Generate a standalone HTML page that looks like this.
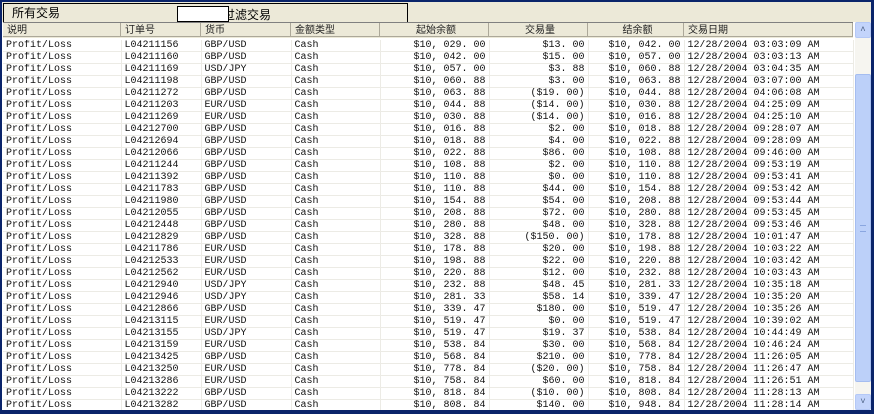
<!DOCTYPE html>
<html><head><meta charset="utf-8"><style>
body{margin:0;width:874px;height:414px;overflow:hidden;background:#0a246a;position:relative;font-family:"Liberation Mono","Noto Sans CJK SC",monospace;}
#win{position:absolute;left:2px;top:2px;width:869px;height:408px;background:#fff;overflow:hidden}
#tabs{position:absolute;left:0;top:0;width:869px;height:20px;background:#ece9d8;}
.tab{position:absolute;top:1px;height:19px;border:1px solid #000;border-bottom:none;font:12px "Liberation Sans","Noto Sans CJK SC",sans-serif;line-height:19px;background:#ece9d8}
#hdr{position:absolute;left:1px;top:20px;height:15px;width:850px;background:#ece9d8;border-top:1px solid #808080}
.h{position:absolute;top:0;height:14px;border-right:1px solid #aca899;border-bottom:1px solid #aca899;font:10px "Liberation Sans","Noto Sans CJK SC",sans-serif;line-height:15px;color:#222;padding-left:4px;box-sizing:border-box}
table{position:absolute;left:1px;top:38px;border-collapse:collapse;table-layout:fixed;width:850px;font-size:10px;}
td{height:11px;line-height:11px;padding:0 3px;border-right:1px solid #ecebe5;border-bottom:1px solid #ecebe5;white-space:nowrap;overflow:hidden;color:#111}
td.r{text-align:right}
#sb{position:absolute;left:853px;top:20px;width:16px;height:388px;background:#f6f5f0}
.btn{position:absolute;left:0;width:16px;height:16px;background:#c3d4fb;border:1px solid #b4c8f6;box-sizing:border-box;border-radius:2px;color:#4d6185;font-size:9px;text-align:center;line-height:15px}
#thumb{position:absolute;left:0;top:52px;width:16px;height:308px;background:#bcd0f9;border:1px solid #a5bdf0;box-sizing:border-box;border-radius:2px}
</style></head><body>
<div id="win">
<div id="tabs">
<div class="tab" style="left:1px;width:405px;padding-left:8px;box-sizing:border-box">所有交易</div>
<div style="position:absolute;left:221px;top:4px;font:12px 'Liberation Sans','Noto Sans CJK SC',sans-serif">过滤交易</div>
<div style="position:absolute;left:175px;top:4px;width:50px;height:14px;background:#fff;border:1px solid #000"></div>
</div>
<div id="hdr">
<div class="h" style="left:0;width:118px">说明</div>
<div class="h" style="left:118px;width:80px">订单号</div>
<div class="h" style="left:198px;width:90px">货币</div>
<div class="h" style="left:288px;width:89px">金额类型</div>
<div class="h" style="left:377px;width:109px;text-align:center">起始余额</div>
<div class="h" style="left:486px;width:99px;text-align:center">交易量</div>
<div class="h" style="left:585px;width:96px;text-align:center">结余额</div>
<div class="h" style="left:681px;width:169px">交易日期</div>
</div>
<table>
<colgroup><col style="width:118px"><col style="width:80px"><col style="width:90px"><col style="width:89px"><col style="width:109px"><col style="width:99px"><col style="width:96px"><col style="width:169px"></colgroup>
<tr><td>Profit/Loss</td><td>L04211156</td><td>GBP/USD</td><td>Cash</td><td class="r">$10, 029. 00</td><td class="r">$13. 00</td><td class="r">$10, 042. 00</td><td>12/28/2004 03:03:09 AM</td></tr>
<tr><td>Profit/Loss</td><td>L04211160</td><td>GBP/USD</td><td>Cash</td><td class="r">$10, 042. 00</td><td class="r">$15. 00</td><td class="r">$10, 057. 00</td><td>12/28/2004 03:03:13 AM</td></tr>
<tr><td>Profit/Loss</td><td>L04211169</td><td>USD/JPY</td><td>Cash</td><td class="r">$10, 057. 00</td><td class="r">$3. 88</td><td class="r">$10, 060. 88</td><td>12/28/2004 03:04:35 AM</td></tr>
<tr><td>Profit/Loss</td><td>L04211198</td><td>GBP/USD</td><td>Cash</td><td class="r">$10, 060. 88</td><td class="r">$3. 00</td><td class="r">$10, 063. 88</td><td>12/28/2004 03:07:00 AM</td></tr>
<tr><td>Profit/Loss</td><td>L04211272</td><td>GBP/USD</td><td>Cash</td><td class="r">$10, 063. 88</td><td class="r">($19. 00)</td><td class="r">$10, 044. 88</td><td>12/28/2004 04:06:08 AM</td></tr>
<tr><td>Profit/Loss</td><td>L04211203</td><td>EUR/USD</td><td>Cash</td><td class="r">$10, 044. 88</td><td class="r">($14. 00)</td><td class="r">$10, 030. 88</td><td>12/28/2004 04:25:09 AM</td></tr>
<tr><td>Profit/Loss</td><td>L04211269</td><td>EUR/USD</td><td>Cash</td><td class="r">$10, 030. 88</td><td class="r">($14. 00)</td><td class="r">$10, 016. 88</td><td>12/28/2004 04:25:10 AM</td></tr>
<tr><td>Profit/Loss</td><td>L04212700</td><td>GBP/USD</td><td>Cash</td><td class="r">$10, 016. 88</td><td class="r">$2. 00</td><td class="r">$10, 018. 88</td><td>12/28/2004 09:28:07 AM</td></tr>
<tr><td>Profit/Loss</td><td>L04212694</td><td>GBP/USD</td><td>Cash</td><td class="r">$10, 018. 88</td><td class="r">$4. 00</td><td class="r">$10, 022. 88</td><td>12/28/2004 09:28:09 AM</td></tr>
<tr><td>Profit/Loss</td><td>L04212066</td><td>GBP/USD</td><td>Cash</td><td class="r">$10, 022. 88</td><td class="r">$86. 00</td><td class="r">$10, 108. 88</td><td>12/28/2004 09:46:00 AM</td></tr>
<tr><td>Profit/Loss</td><td>L04211244</td><td>GBP/USD</td><td>Cash</td><td class="r">$10, 108. 88</td><td class="r">$2. 00</td><td class="r">$10, 110. 88</td><td>12/28/2004 09:53:19 AM</td></tr>
<tr><td>Profit/Loss</td><td>L04211392</td><td>GBP/USD</td><td>Cash</td><td class="r">$10, 110. 88</td><td class="r">$0. 00</td><td class="r">$10, 110. 88</td><td>12/28/2004 09:53:41 AM</td></tr>
<tr><td>Profit/Loss</td><td>L04211783</td><td>GBP/USD</td><td>Cash</td><td class="r">$10, 110. 88</td><td class="r">$44. 00</td><td class="r">$10, 154. 88</td><td>12/28/2004 09:53:42 AM</td></tr>
<tr><td>Profit/Loss</td><td>L04211980</td><td>GBP/USD</td><td>Cash</td><td class="r">$10, 154. 88</td><td class="r">$54. 00</td><td class="r">$10, 208. 88</td><td>12/28/2004 09:53:44 AM</td></tr>
<tr><td>Profit/Loss</td><td>L04212055</td><td>GBP/USD</td><td>Cash</td><td class="r">$10, 208. 88</td><td class="r">$72. 00</td><td class="r">$10, 280. 88</td><td>12/28/2004 09:53:45 AM</td></tr>
<tr><td>Profit/Loss</td><td>L04212448</td><td>GBP/USD</td><td>Cash</td><td class="r">$10, 280. 88</td><td class="r">$48. 00</td><td class="r">$10, 328. 88</td><td>12/28/2004 09:53:46 AM</td></tr>
<tr><td>Profit/Loss</td><td>L04212829</td><td>GBP/USD</td><td>Cash</td><td class="r">$10, 328. 88</td><td class="r">($150. 00)</td><td class="r">$10, 178. 88</td><td>12/28/2004 10:01:47 AM</td></tr>
<tr><td>Profit/Loss</td><td>L04211786</td><td>EUR/USD</td><td>Cash</td><td class="r">$10, 178. 88</td><td class="r">$20. 00</td><td class="r">$10, 198. 88</td><td>12/28/2004 10:03:22 AM</td></tr>
<tr><td>Profit/Loss</td><td>L04212533</td><td>EUR/USD</td><td>Cash</td><td class="r">$10, 198. 88</td><td class="r">$22. 00</td><td class="r">$10, 220. 88</td><td>12/28/2004 10:03:42 AM</td></tr>
<tr><td>Profit/Loss</td><td>L04212562</td><td>EUR/USD</td><td>Cash</td><td class="r">$10, 220. 88</td><td class="r">$12. 00</td><td class="r">$10, 232. 88</td><td>12/28/2004 10:03:43 AM</td></tr>
<tr><td>Profit/Loss</td><td>L04212940</td><td>USD/JPY</td><td>Cash</td><td class="r">$10, 232. 88</td><td class="r">$48. 45</td><td class="r">$10, 281. 33</td><td>12/28/2004 10:35:18 AM</td></tr>
<tr><td>Profit/Loss</td><td>L04212946</td><td>USD/JPY</td><td>Cash</td><td class="r">$10, 281. 33</td><td class="r">$58. 14</td><td class="r">$10, 339. 47</td><td>12/28/2004 10:35:20 AM</td></tr>
<tr><td>Profit/Loss</td><td>L04212866</td><td>GBP/USD</td><td>Cash</td><td class="r">$10, 339. 47</td><td class="r">$180. 00</td><td class="r">$10, 519. 47</td><td>12/28/2004 10:35:26 AM</td></tr>
<tr><td>Profit/Loss</td><td>L04213115</td><td>EUR/USD</td><td>Cash</td><td class="r">$10, 519. 47</td><td class="r">$0. 00</td><td class="r">$10, 519. 47</td><td>12/28/2004 10:39:02 AM</td></tr>
<tr><td>Profit/Loss</td><td>L04213155</td><td>USD/JPY</td><td>Cash</td><td class="r">$10, 519. 47</td><td class="r">$19. 37</td><td class="r">$10, 538. 84</td><td>12/28/2004 10:44:49 AM</td></tr>
<tr><td>Profit/Loss</td><td>L04213159</td><td>EUR/USD</td><td>Cash</td><td class="r">$10, 538. 84</td><td class="r">$30. 00</td><td class="r">$10, 568. 84</td><td>12/28/2004 10:46:24 AM</td></tr>
<tr><td>Profit/Loss</td><td>L04213425</td><td>GBP/USD</td><td>Cash</td><td class="r">$10, 568. 84</td><td class="r">$210. 00</td><td class="r">$10, 778. 84</td><td>12/28/2004 11:26:05 AM</td></tr>
<tr><td>Profit/Loss</td><td>L04213250</td><td>EUR/USD</td><td>Cash</td><td class="r">$10, 778. 84</td><td class="r">($20. 00)</td><td class="r">$10, 758. 84</td><td>12/28/2004 11:26:47 AM</td></tr>
<tr><td>Profit/Loss</td><td>L04213286</td><td>EUR/USD</td><td>Cash</td><td class="r">$10, 758. 84</td><td class="r">$60. 00</td><td class="r">$10, 818. 84</td><td>12/28/2004 11:26:51 AM</td></tr>
<tr><td>Profit/Loss</td><td>L04213222</td><td>GBP/USD</td><td>Cash</td><td class="r">$10, 818. 84</td><td class="r">($10. 00)</td><td class="r">$10, 808. 84</td><td>12/28/2004 11:28:13 AM</td></tr>
<tr><td>Profit/Loss</td><td>L04213282</td><td>GBP/USD</td><td>Cash</td><td class="r">$10, 808. 84</td><td class="r">$140. 00</td><td class="r">$10, 948. 84</td><td>12/28/2004 11:28:14 AM</td></tr>
</table>
<div id="sb">
<div class="btn" style="top:0">&#x2C4;</div>
<div id="thumb"><div style="position:absolute;left:4px;top:150px;width:6px;height:5px;border-top:1px solid #8aa6e0;border-bottom:1px solid #8aa6e0"></div></div>
<div class="btn" style="top:372px">&#x2C5;</div>
</div>
</div>
</body></html>
